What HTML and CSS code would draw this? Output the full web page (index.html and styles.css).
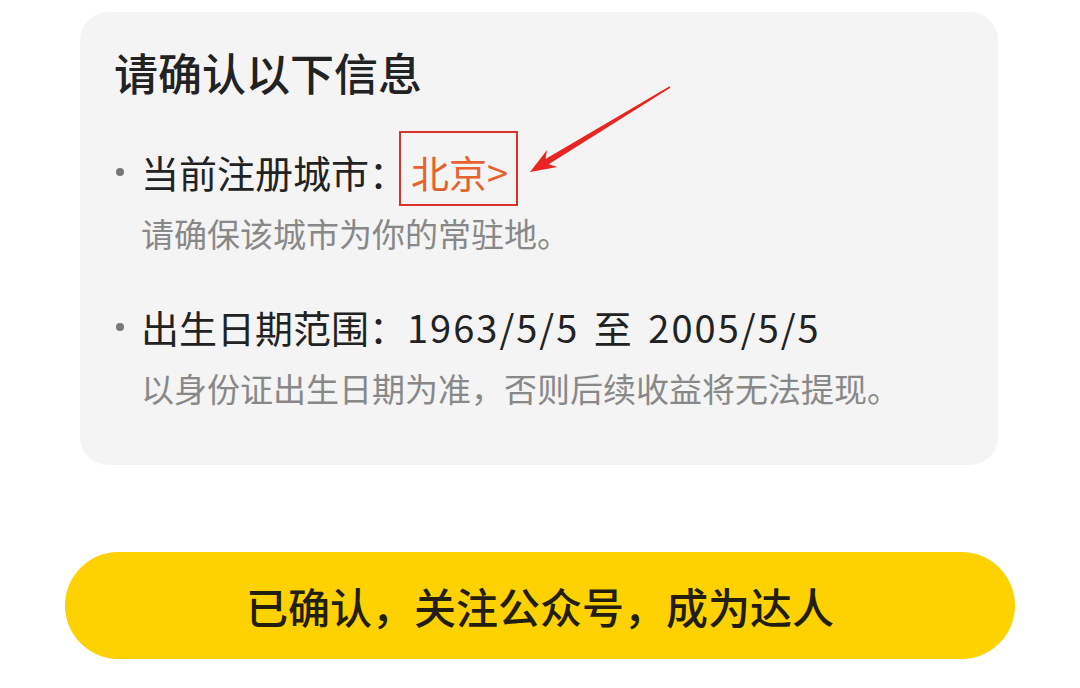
FILE: index.html
```html
<!DOCTYPE html>
<html lang="zh-CN">
<head>
<meta charset="utf-8">
<title>确认信息</title>
<link rel="stylesheet" href="styles.css">
</head>
<body>
<div class="page">
  <section class="card">
    <h1 class="title">请确认以下信息</h1>
    <ul class="list">
      <li class="item">
        <div class="main">当前注册城市：<span class="city">北京&gt;</span></div>
        <div class="sub">请确保该城市为你的常驻地。</div>
      </li>
      <li class="item item-2">
        <div class="main">出生日期范围：<span class="dates">1963/5/5 至 2005/5/5</span></div>
        <div class="sub">以身份证出生日期为准，否则后续收益将无法提现。</div>
      </li>
    </ul>
  </section>
  <button class="confirm">已确认，关注公众号，成为达人</button>
  <svg class="arrow" width="1080" height="688" viewBox="0 0 1080 688">
    <polygon fill="#e82520" points="670.4,87.7 548.7,164.2 557.4,167.0 530,172 547.0,150.0 545.5,159.0 669.6,86.3"/>
  </svg>
</div>
</body>
</html>
```
FILE: styles.css
```css
html, body {
  margin: 0;
  padding: 0;
  background: #ffffff;
}
body {
  font-family: "Noto Sans CJK SC", "PingFang SC", sans-serif;
  color: #222222;
}
.page {
  position: relative;
  width: 1080px;
  height: 688px;
  overflow: hidden;
  padding-top: 12px;
  box-sizing: border-box;
}
.card {
  margin-left: 80px;
  width: 918px;
  box-sizing: border-box;
  background: #f4f4f4;
  border-radius: 28px;
  padding: 34px 36px 55px 36px;
}
.title {
  margin: 0 0 0 -2px;
  font-size: 44px;
  line-height: 52px;
  font-weight: 500;
  color: #222222;
}
.list {
  list-style: none;
  margin: 48px 0 0 0;
  padding: 0;
}
.item {
  position: relative;
  padding-left: 25px;
}
.item::before {
  content: "";
  position: absolute;
  left: 0;
  top: 22px;
  width: 8px;
  height: 8px;
  border-radius: 50%;
  background: #777777;
}
.item-2 {
  margin-top: 46px;
}
.main {
  font-size: 38px;
  line-height: 52px;
  color: #222222;
}
.dates {
  letter-spacing: 2px;
  word-spacing: 4px;
}
.sub {
  margin-top: 13px;
  font-size: 33px;
  line-height: 44px;
  color: #888888;
}
.city {
  position: relative;
  margin-left: 4px;
  color: #e6622e;
}
.city::after {
  content: "";
  position: absolute;
  left: -12px;
  right: -10px;
  top: -13px;
  bottom: -7px;
  border: 2px solid #d8342c;
}
.confirm {
  display: block;
  margin: 87px 0 0 65px;
  width: 950px;
  height: 107px;
  border: none;
  border-radius: 54px;
  background: #fed100;
  font-family: "Noto Sans CJK SC", "PingFang SC", sans-serif;
  font-size: 42px;
  font-weight: 500;
  color: #221e10;
  padding: 0;
}
.arrow {
  position: absolute;
  left: 0;
  top: 0;
  pointer-events: none;
}
```
